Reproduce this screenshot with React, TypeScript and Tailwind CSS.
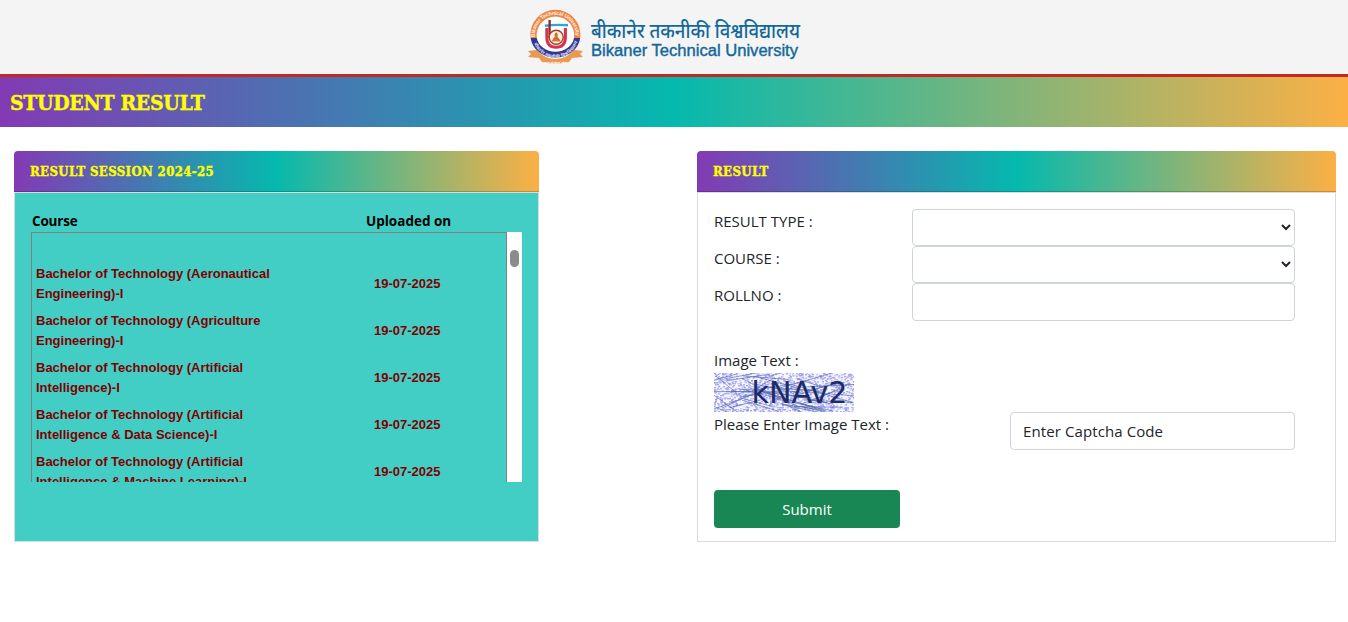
import React, { useState } from 'react';

interface SessionRow {
    course: [string, string];
    uploadedOn: string;
}

const sessionRows: SessionRow[] = [
    { course: ['Bachelor of Technology (Aeronautical', 'Engineering)-I'], uploadedOn: '19-07-2025' },
    { course: ['Bachelor of Technology (Agriculture', 'Engineering)-I'], uploadedOn: '19-07-2025' },
    { course: ['Bachelor of Technology (Artificial', 'Intelligence)-I'], uploadedOn: '19-07-2025' },
    { course: ['Bachelor of Technology (Artificial', 'Intelligence & Data Science)-I'], uploadedOn: '19-07-2025' },
    { course: ['Bachelor of Technology (Artificial', 'Intelligence & Machine Learning)-I'], uploadedOn: '19-07-2025' },
];

// small seeded generator so the captcha noise is the same on every render
const createRandom = (seed: number) => () => {
    seed = (seed * 16807) % 2147483647;
    return seed / 2147483647;
};

const random = createRandom(4271);

const captchaDots = Array.from({ length: 1500 }, () => ({
    x: Math.floor(random() * 140),
    y: Math.floor(random() * 39),
    fill: ['#a3a3ec', '#b9b9f5', '#8d90e4', '#d3d3fa'][Math.floor(random() * 4)],
}));

const captchaLines = Array.from({ length: 52 }, () => {
    const x = random() * 105 - 10;
    const y = random() * 39;
    return { x1: x, y1: y, x2: x + 20 + random() * 40, y2: y + random() * 44 - 22 };
});

const Logo: React.FC = () => (
    <svg className="block h-[74px] w-[290px]" viewBox="520 0 290 74">
        <defs>
            <path id="arc-top" d="M535 39 A20.6 20.6 0 1 1 575.6 39" />
            <path id="arc-bottom" d="M532.6 38 A23 23 0 0 0 578.2 38" />
        </defs>
        <path d="M528 51 L536 50 H575 L583 51 L580 54 L583 57 L572 58 L569 62 Q555.4 65.5 542 62 L539 58 L528 57 L531 54 Z" fill="#eb9850" />
        <circle cx="555.4" cy="35.5" r="23.5" fill="#fff" />
        <path d="M530.6 38 A25 25 0 1 1 580.2 38 L574 38 A18.8 18.8 0 1 0 536.8 38 Z" fill="#ef8544" />
        <path d="M530.6 38 A25 22.5 0 0 0 580.2 38 L574 38 A18.8 16 0 0 1 536.8 38 Z" fill="#343791" />
        <text fill="#fff3e8" className="font-['Liberation_Sans'] text-[5.2px] font-bold">
            <textPath href="#arc-top" startOffset="2" textLength="66">Bikaner Technical University</textPath>
        </text>
        <text fill="#dfe0f5" className="font-['Noto_Sans_Devanagari','Liberation_Sans',sans-serif] text-[4.4px] font-bold">
            <textPath href="#arc-bottom" startOffset="6" textLength="56">बीकानेर तकनीकी विश्वविद्यालय</textPath>
        </text>
        <text x="544" y="63.6" fill="#fff7ea" textLength="23" className="font-['Noto_Sans_Devanagari','Liberation_Sans',sans-serif] text-[3.4px] font-bold">ज्ञान संस्कार ध्येय</text>
        <path d="M546.8 28 V37 Q546.8 47.3 556 47.3 Q565.4 47.3 565.4 37 V28" fill="none" stroke="#d6344b" strokeWidth="3" />
        <path d="M545 25.8 Q556 24.4 568 25.2" fill="none" stroke="#28a9d8" strokeWidth="2.4" />
        <path d="M549.6 20 V38" stroke="#8c2f2b" strokeWidth="2.4" />
        <circle cx="556.2" cy="37.2" r="7" fill="#fff0dc" stroke="#a43a2f" strokeWidth="1.4" />
        <path d="M556.2 32 L558 34.5 L557.6 36.5 L561 41.5 H551.4 L554.8 36.5 L554.4 34.5 Z" fill="#d5793c" />
        <path d="M553 39.5 L556 38 L559.5 40 M556 33 V36" stroke="#b3562f" strokeWidth="0.7" fill="none" />
        <text x="591" y="38" fill="#12689a" textLength="209" lengthAdjust="spacingAndGlyphs" className="font-['Noto_Sans_Devanagari','Noto_Sans',sans-serif] text-[20px] font-medium">
            बीकानेर तकनीकी विश्वविद्यालय
        </text>
        <text x="591" y="55.5" fill="#12689a" stroke="#12689a" strokeWidth="0.4" textLength="207" lengthAdjust="spacingAndGlyphs" className="font-['Liberation_Sans',sans-serif] text-[16px]">
            Bikaner Technical University
        </text>
    </svg>
);

const Captcha: React.FC = () => (
    <svg className="block h-[39px] w-[140px] overflow-hidden" viewBox="0 0 140 39">
        <rect width="140" height="39" fill="#f6f6ff" />
        {captchaDots.map((dot, i) => (
            <rect key={i} x={dot.x} y={dot.y} width="2" height="1.4" fill={dot.fill} opacity="0.75" />
        ))}
        {captchaLines.map((line, i) => (
            <line key={i} {...line} stroke="#5268ae" strokeWidth="0.9" opacity="0.7" />
        ))}
        <text x="37.5" y="30" fill="#1b2a68" textLength="96" lengthAdjust="spacingAndGlyphs" className="font-['DejaVu_Sans',sans-serif] text-[30px]">
            kNAv2
        </text>
    </svg>
);

const CardHeader: React.FC<{ title: string }> = ({ title }) => (
    <div className="h-[42px] border-b border-[#d9dbe0]">
        <div className="h-[41px] rounded-t-[4px] border-b border-black/20 bg-[linear-gradient(90deg,#833ab4_0%,#05b9ae_50%,#fcb045_100%)] bg-origin-border px-4 pt-[11px]">
            <h5 className="font-['DejaVu_Serif_Condensed','DejaVu_Serif',serif] text-[13px] leading-[20px] font-bold tracking-[0.4px] text-[#ffff00] [-webkit-text-stroke:0.4px_#ffff00]">
                {title}
            </h5>
        </div>
    </div>
);

const SessionCard: React.FC = () => (
    <section className="h-[391px] w-[525px]">
        <CardHeader title="RESULT SESSION 2024-25" />
        <div className="h-[349px] border border-t-0 border-[#d9dbe0] bg-[#43cec5] pt-[18px] pl-4">
            <div className="flex h-[21px] items-center text-[13.5px] font-bold text-black">
                <span className="w-[334px] pl-px tracking-[-0.2px]">Course</span>
                <span className="pl-px">Uploaded on</span>
            </div>
            <div className="flex h-[250px] w-[491px] overflow-hidden">
                <div className="h-[400px] w-[476px] border border-[#808080] pt-[27px] font-['Liberation_Sans',sans-serif] text-[13px] leading-[20px] font-bold text-[#800000]">
                    {sessionRows.map((row) => (
                        <div key={row.course.join(' ')} className="flex h-[47px] items-center">
                            <div className="w-[342px] pl-1">
                                {row.course[0]}
                                <br />
                                {row.course[1]}
                            </div>
                            <div>{row.uploadedOn}</div>
                        </div>
                    ))}
                </div>
                <div className="w-[15px] bg-white pt-[18px] pl-[3px]">
                    <div className="h-[17px] w-[9px] rounded-full bg-[#8b8b8b]"></div>
                </div>
            </div>
        </div>
    </section>
);

const ResultForm: React.FC = () => {
    const [rollNo, setRollNo] = useState('');
    const [captcha, setCaptcha] = useState('');

    return (
        <section className="h-[391px] w-[639px]">
            <CardHeader title="RESULT" />
            <form className="h-[349px] border border-t-0 border-[#d9dbe0] bg-white pt-4 pl-4" onSubmit={(e) => e.preventDefault()}>
                <div className="flex h-[37px]">
                    <label className="w-[198px] leading-[24px]">RESULT TYPE :</label>
                    <select className="h-[37px] w-[383px] rounded-[4px] border border-[#ced4da] bg-white"></select>
                </div>
                <div className="flex h-[37px]">
                    <label className="w-[198px] leading-[24px]">COURSE :</label>
                    <select className="h-[37px] w-[383px] rounded-[4px] border border-[#ced4da] bg-white"></select>
                </div>
                <div className="flex h-[65px]">
                    <label className="w-[198px] leading-[24px]">ROLLNO :</label>
                    <input
                        className="h-[38px] w-[383px] rounded-[4px] border border-[#ced4da] bg-white px-3"
                        value={rollNo}
                        onChange={(e) => setRollNo(e.target.value)}
                    />
                </div>
                <div className="h-[25px] leading-[24px]">Image Text :</div>
                <Captcha />
                <div className="flex h-[78px]">
                    <label className="w-[296px] leading-[24px]">Please Enter Image Text :</label>
                    <input
                        className="h-[38px] w-[285px] rounded-[4px] border border-[#ced4da] bg-white px-3 tracking-[0.1px] placeholder:text-[#212529] placeholder:opacity-100"
                        placeholder="Enter Captcha Code"
                        value={captcha}
                        onChange={(e) => setCaptcha(e.target.value)}
                    />
                </div>
                <button className="block h-[38px] w-[186px] rounded-[4px] bg-[#198754] text-white">Submit</button>
            </form>
        </section>
    );
};

const App: React.FC = () => {
    return (
        <div className="h-[622px] overflow-hidden bg-white font-['Open_Sans','Noto_Sans',sans-serif] text-[15px] text-[#212529]">
            <header className="h-[77px] border-b-[3px] border-[#c02a22] bg-[#f4f4f4] pl-[520px]">
                <Logo />
            </header>
            <div className="flex h-[50px] items-center bg-[linear-gradient(90deg,#833ab4_0%,#05b9ae_50%,#fcb045_100%)] pt-[2px] pl-[10px]">
                <h1 className="font-['DejaVu_Serif_Condensed','DejaVu_Serif',serif] text-[21px] font-bold tracking-[-0.3px] text-[#ffff00] [-webkit-text-stroke:0.4px_#ffff00]">
                    STUDENT RESULT
                </h1>
            </div>
            <main className="flex justify-between pt-6 pr-3 pl-[14px]">
                <SessionCard />
                <ResultForm />
            </main>
        </div>
    );
};

export default App;
